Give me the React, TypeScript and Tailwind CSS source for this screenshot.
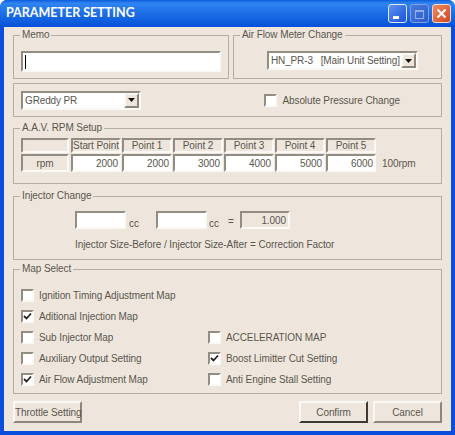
import type { ReactNode } from 'react';

const sunken = 'border-2 border-t-[#918d82] border-l-[#918d82] border-b-[#fbf9f5] border-r-[#fbf9f5]';
const raised = 'border-t-2 border-l-2 border-b-2 border-r-2 border-t-[#faf8f4] border-l-[#faf8f4] border-b-[#8b877c] border-r-[#8b877c]';

function Group({ title, className, children }: { title?: string; className: string; children: ReactNode }) {
  return (
    <div className={`relative border border-[#b3b0a3] ${className}`}>
      {title && (
        <span className="absolute -top-[8px] left-[6px] bg-[#eee6dd] px-[2px] leading-[14px]">{title}</span>
      )}
      {children}
    </div>
  );
}

function Combo({ value, className }: { value: string; className: string }) {
  return (
    <div className={`flex items-center bg-white ${sunken} ${className}`}>
      <span className="flex-1 pl-[2px] whitespace-pre overflow-hidden tracking-[-0.14px]">{value}</span>
      <span className={`flex items-center justify-center w-[15px] h-full bg-[#eee6dd] ${raised}`}>
        <svg width="7" height="4" viewBox="0 0 7 4">
          <path d="M0 0h7L3.5 4z" fill="#111" />
        </svg>
      </span>
    </div>
  );
}

function Check({ label, checked = false, className = '' }: { label: string; checked?: boolean; className?: string }) {
  return (
    <div className={`flex items-center gap-[5px] h-[14px] ${className}`}>
      <span className={`flex items-center justify-center w-[13px] h-[13px] bg-white ${sunken}`}>
        {checked && (
          <svg width="9" height="9" viewBox="0 0 9 9" className="shrink-0">
            <path d="M1 4l2.5 2.5L8 1.5" fill="none" stroke="#222" strokeWidth="1.8" />
          </svg>
        )}
      </span>
      <span className="whitespace-nowrap">{label}</span>
    </div>
  );
}

const headers = ['Start Point', 'Point 1', 'Point 2', 'Point 3', 'Point 4', 'Point 5'];
const values = ['2000', '2000', '3000', '4000', '5000', '6000'];

function WinButton({ kind }: { kind: 'min' | 'max' | 'close' }) {
  const bg = kind === 'close'
    ? 'border-[#f3d8cc] bg-gradient-to-br from-[#ec8a60] to-[#d2451a]'
    : kind === 'min'
      ? 'border-[#dfe8fb] bg-gradient-to-br from-[#5f90ee] to-[#1c50d8]'
      : 'border-[#7f9fe6] bg-gradient-to-br from-[#4a78dc] to-[#2a5cc8]';
  return (
    <span className={`flex items-center justify-center w-[19px] h-[19px] rounded-[3px] border ${bg}`}>
      <svg width="13" height="13" viewBox="0 0 13 13">
        {kind === 'min' && <rect x="2" y="9" width="6" height="3" fill="#fff" />}
        {kind === 'max' && <path d="M2.5 3.5h8v8h-8zM2.5 4.5h8" fill="none" stroke="#8fabe8" strokeWidth="1.2" />}
        {kind === 'close' && <path d="M2.5 2.5l8 8M10.5 2.5l-8 8" stroke="#fff" strokeWidth="2" />}
      </svg>
    </span>
  );
}

export default function App() {
  return (
    <div className="w-[455px] h-[435px] bg-white overflow-hidden font-['Liberation_Sans',sans-serif] text-[10px] tracking-[-0.08px] text-[#5a564e]">
      <div className="flex flex-col h-full rounded-t-[7px] overflow-hidden bg-[#0a4fdc]">
        {/* title bar */}
        <div className="flex items-center justify-between h-[27px] shrink-0 pl-[6px] pr-[4px] bg-gradient-to-b from-[#0b5cdc] from-[0%] via-[#2f84f0] via-[12%] to-[#0650d8] to-[100%]">
          <span className="text-white font-['Lato',sans-serif] font-bold text-[12.5px] tracking-normal leading-none">PARAMETER SETTING</span>
          <div className="flex gap-[3px]">
            <WinButton kind="min" />
            <WinButton kind="max" />
            <WinButton kind="close" />
          </div>
        </div>

        <div className="flex-1 mx-[4px] mb-[4px] bg-[#eee6dd] px-[9px] pt-[8px]">
          <div className="flex gap-[4px]">
            <Group title="Memo" className="w-[216px] h-[44px] pt-[15px] pl-[7px]">
              <div className={`flex items-center w-[200px] h-[21px] pl-[2px] bg-white ${sunken}`}>
                <span className="w-px h-[14px] bg-black" />
              </div>
            </Group>
            <Group title="Air Flow Meter Change" className="w-[209px] h-[44px] pt-[15px] pl-[33px]">
              <Combo value="HN_PR-3   [Main Unit Setting]" className="w-[151px] h-[19px]" />
            </Group>
          </div>

          <Group className="flex items-center justify-between h-[34px] mt-[4px] pl-[7px] pr-[41px]">
            <Combo value="GReddy PR" className="w-[120px] h-[19px]" />
            <Check label="Absolute Pressure Change" />
          </Group>

          <Group title="A.A.V. RPM Setup" className="h-[56px] mt-[11px] pt-[9px] pl-[7px]">
            <div className="flex gap-[1px] items-end">
              <div className="flex flex-col gap-[1px] w-[48px] mr-[1px]">
                <div className={`h-[15px] ${sunken}`} />
                <div className={`flex items-center justify-center h-[18px] ${sunken}`}>rpm</div>
              </div>
              {headers.map((h, i) => (
                <div key={h} className="flex flex-col gap-[1px] w-[50px]">
                  <div className={`flex items-center justify-center h-[15px] whitespace-nowrap ${sunken}`}>{h}</div>
                  <div className={`flex items-center justify-end h-[18px] pr-[1px] bg-white ${sunken}`}>{values[i]}</div>
                </div>
              ))}
              <span className="ml-[5px] h-[16px] leading-[16px]">100rpm</span>
            </div>
          </Group>

          <Group title="Injector Change" className="h-[64px] mt-[12px] pt-[14px] pl-[61px]">
            <div className="flex items-end h-[18px]">
              <div className={`w-[51px] h-[18px] bg-white ${sunken}`} />
              <span className="ml-[3px] w-[27px] leading-[11px]">cc</span>
              <div className={`w-[51px] h-[18px] bg-white ${sunken}`} />
              <span className="ml-[2px] w-[19px] leading-[11px]">cc</span>
              <span className="w-[12px] leading-[15px]">=</span>
              <div className={`flex items-center justify-end w-[50px] h-[18px] pr-[2px] ${sunken}`}>1.000</div>
            </div>
            <p className="mt-[9px] leading-[14px] whitespace-nowrap">Injector Size-Before / Injector Size-After = Correction Factor</p>
          </Group>

          <Group title="Map Select" className="flex flex-col gap-[7px] h-[125px] mt-[9px] pt-[18px] pl-[7px]">
            <Check label="Ignition Timing Adjustment Map" />
            <Check label="Aditional Injection Map" checked />
            <div className="flex">
              <Check label="Sub Injector Map" className="w-[187px]" />
              <Check label="ACCELERATION MAP" />
            </div>
            <div className="flex">
              <Check label="Auxiliary Output Setting" className="w-[187px]" />
              <Check label="Boost Limitter Cut Setting" checked />
            </div>
            <div className="flex">
              <Check label="Air Flow Adjustment Map" checked className="w-[187px]" />
              <Check label="Anti Engine Stall Setting" />
            </div>
          </Group>

          <div className="flex items-center mt-[7px]">
            <button className={`w-[69px] h-[22px] whitespace-nowrap bg-[#eee6dd] ${raised}`}>Throttle Setting</button>
            <button className="ml-auto w-[69px] h-[22px] bg-[#eee6dd] border-t-2 border-l-2 border-b-2 border-r-2 border-t-[#faf8f4] border-l-[#faf8f4] border-b-[#3d3a34] border-r-[#3d3a34]">Confirm</button>
            <button className={`ml-[5px] w-[69px] h-[22px] bg-[#eee6dd] ${raised}`}>Cancel</button>
          </div>
        </div>
      </div>
    </div>
  );
}
